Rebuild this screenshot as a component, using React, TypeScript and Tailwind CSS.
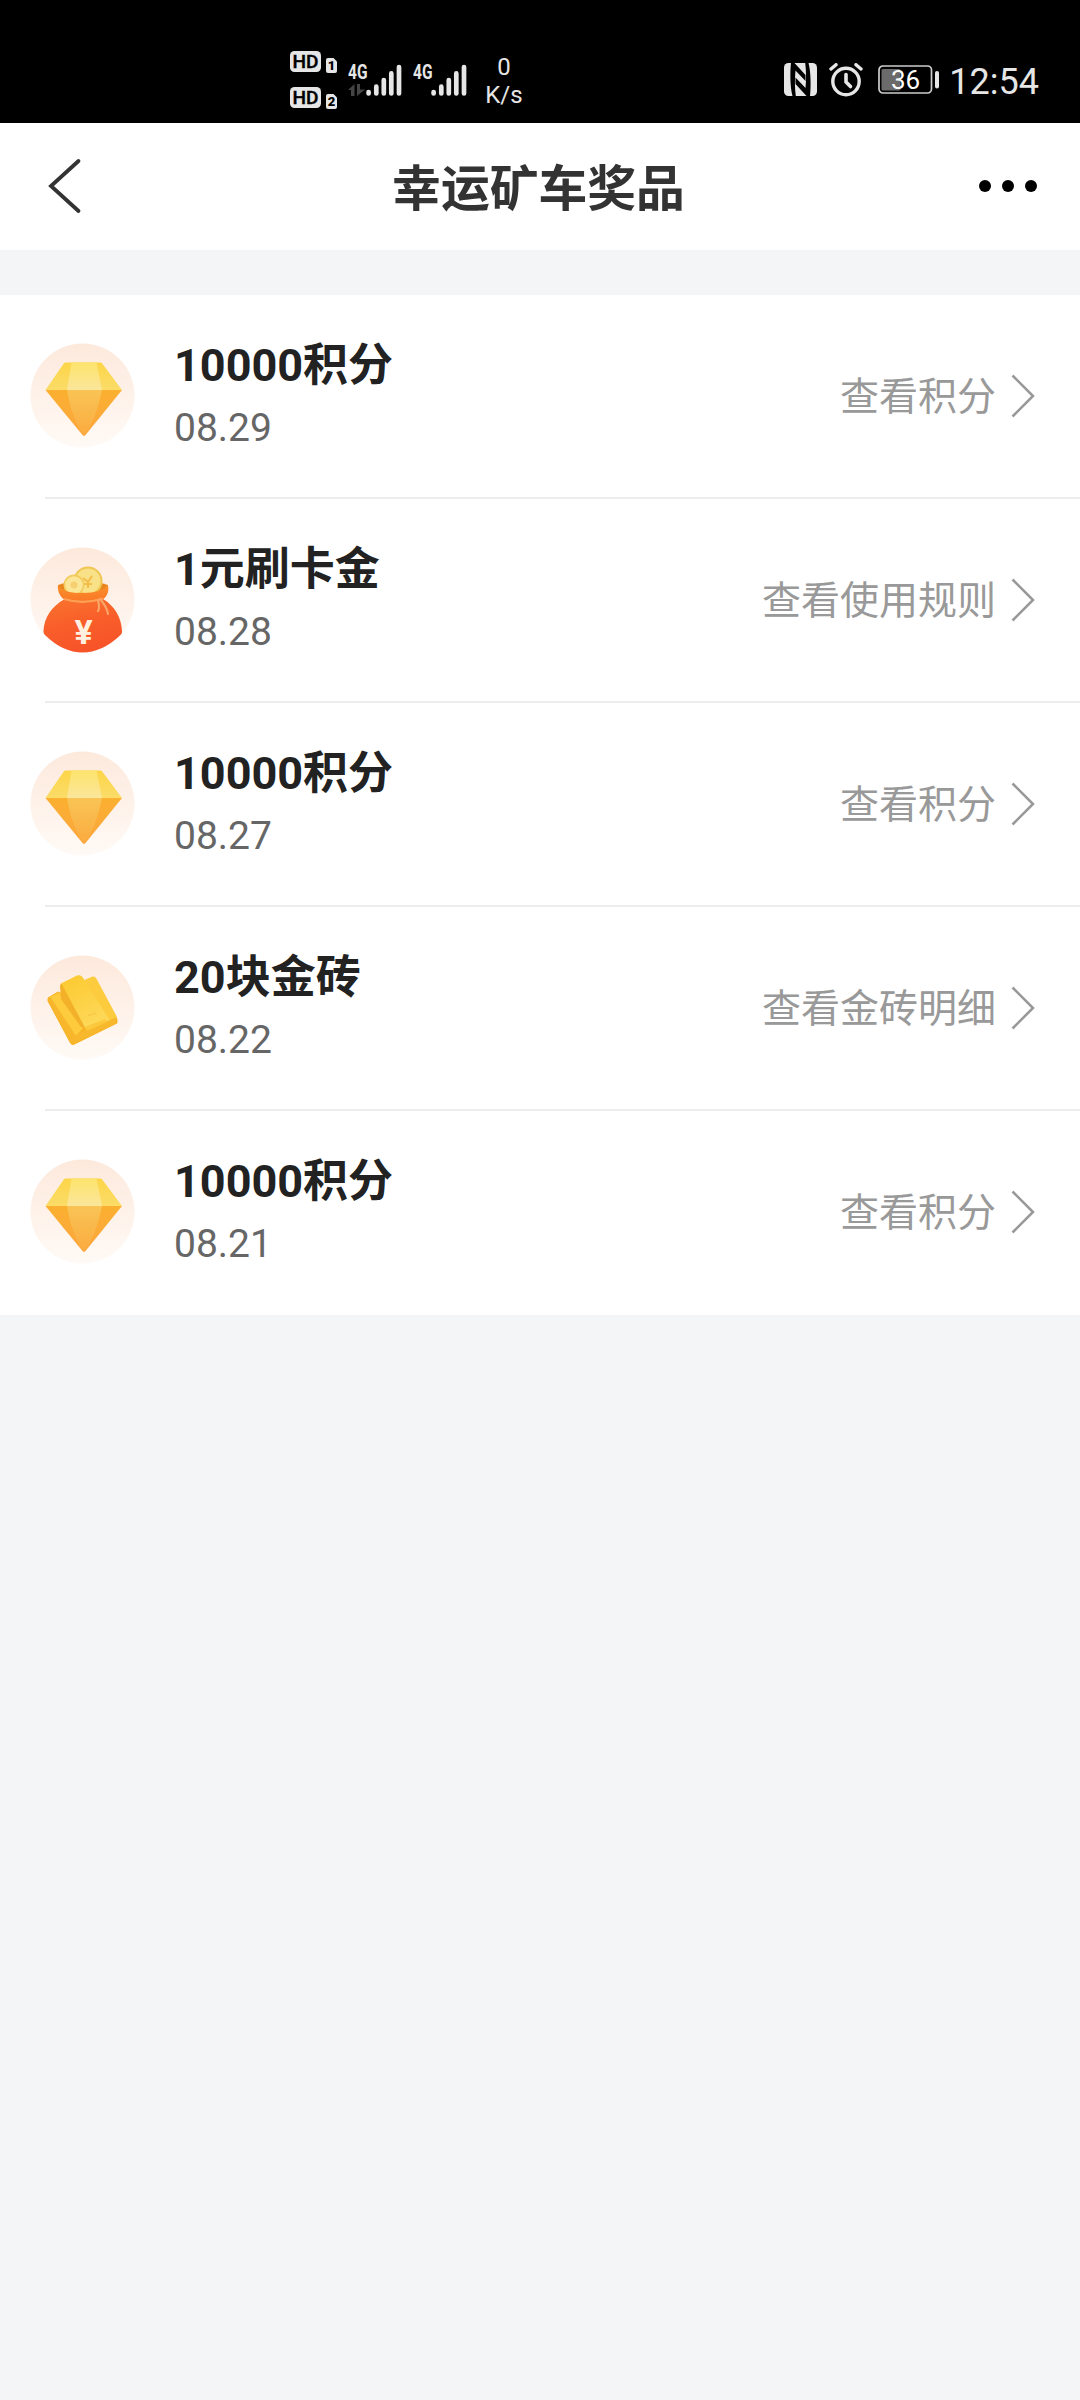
import type { ReactNode } from "react"

type PrizeKind = "points" | "cash" | "gold"

interface Prize {
  title: string
  date: string
  action: string
  kind: PrizeKind
}

const prizes: Prize[] = [
  { title: "10000积分", date: "08.29", action: "查看积分", kind: "points" },
  { title: "1元刷卡金", date: "08.28", action: "查看使用规则", kind: "cash" },
  { title: "10000积分", date: "08.27", action: "查看积分", kind: "points" },
  { title: "20块金砖", date: "08.22", action: "查看金砖明细", kind: "gold" },
  { title: "10000积分", date: "08.21", action: "查看积分", kind: "points" },
]

function HdBadge({ sim }: { sim: number }) {
  return (
    <svg className="w-[48px] h-[23px] block" viewBox="0 0 48 23">
      <rect x="0" y="0" width="31" height="21" rx="4.5" fill="#e6e6e6" />
      <text x="15.5" y="17" textAnchor="middle" fontSize="18.5" fontWeight="500" textLength="26" lengthAdjust="spacingAndGlyphs" fill="#000" stroke="#000" strokeWidth="0.4">
        HD
      </text>
      <path d="M36 9a2 2 0 0 1 2-2h5.5l3.500 3.500V20a2 2 0 0 1-2 2h-7a2 2 0 0 1-2-2z" fill="#e6e6e6" />
      <text x="41.5" y="19.3" textAnchor="middle" fontSize="13" fontWeight="900" fill="#000">
        {sim}
      </text>
    </svg>
  )
}

function Signal({ active }: { active?: boolean }) {
  return (
    <svg className="w-[54px] h-[48px] block" viewBox="0 -12 54 48">
      <text x="0" y="16.5" fontSize="20.5" fontWeight="700" textLength="19.5" lengthAdjust="spacingAndGlyphs" fill="#e6e6e6">
        4G
      </text>
      {active && (
        <g fill="#444">
          <path d="M0 28l6.500-6v12H3v-6z" />
          <path d="M9 22h3v5.500h5L9 34z" />
        </g>
      )}
      <g stroke="#e6e6e6" strokeWidth="4.7" strokeLinecap="round">
        <path d="M20.600 30.100v1.300M28.300 24.700v6.700M35.800 18.100v13.300M43.300 11.400v20M51 5v26.400" />
      </g>
    </svg>
  )
}

function NfcIcon() {
  return (
    <svg className="w-[33px] h-[33px] block" viewBox="0 0 33 33">
      <rect width="33" height="33" rx="4.500" fill="#e6e6e6" />
      <g fill="#000">
        <path d="M7 0h3.500L21.500 12v6L11.500 7.500c-.8 8-.8 18 .3 25.500H8.500C6 24 6 8 7 0z" />
        <path d="M26 33h-3.500L11.500 21v-6.500L21.500 25c.8-8 .8-17-.3-25h3.300c2.500 9 2.500 25 1.500 33z" />
      </g>
    </svg>
  )
}

function AlarmIcon() {
  return (
    <svg className="w-[34px] h-[34px] block" viewBox="0 0 34 34" fill="none" stroke="#e6e6e6" strokeLinecap="round">
      <circle cx="17" cy="18.500" r="13.200" strokeWidth="3.400" />
      <path d="M17 11.500v7.500l4.500 4.500" strokeWidth="3.600" strokeLinejoin="round" />
      <path d="M2 6l5-4.300M32 6l-5-4.300" strokeWidth="3.400" />
    </svg>
  )
}

function Battery() {
  return (
    <svg className="w-[62px] h-[30px] block" viewBox="0 0 62 30">
      <rect x="1" y="1" width="52.500" height="27" rx="4" fill="none" stroke="#ccc" strokeWidth="1.700" />
      <rect x="3.500" y="4" width="19" height="21.500" rx="1.500" fill="#6b6b6b" />
      <text x="27.500" y="24" textAnchor="middle" fontSize="26" fill="#fff">
        36
      </text>
      <rect x="57" y="6" width="4" height="17.500" rx="2" fill="#e6e6e6" />
    </svg>
  )
}

function StatusBar() {
  return (
    <div className="h-[123px] bg-black flex items-start pl-[290px] pr-[41px] text-[#e6e6e6]">
      <div className="pt-[51px] flex flex-col gap-[13px]">
        <HdBadge sim={1} />
        <HdBadge sim={2} />
      </div>
      <div className="pt-[50px] pl-[10px] flex gap-[11px]">
        <Signal active />
        <Signal />
      </div>
      <div className="mt-[53px] ml-[17px] w-[40px] text-center text-[24px] leading-[28px]">
        <div>0</div>
        <div>K/s</div>
      </div>
      <div className="ml-auto mt-[63px] flex h-[36px]">
        <NfcIcon />
        <div className="ml-[12px]">
          <AlarmIcon />
        </div>
        <div className="ml-[15px] mt-[2px]">
          <Battery />
        </div>
        <span className="ml-[9px] pt-px text-[36px] leading-[36px] whitespace-nowrap">12:54</span>
      </div>
    </div>
  )
}

function Header() {
  return (
    <header className="h-[127px] bg-white flex items-center justify-between pl-[48px] pr-[43px] pb-[2px]">
      <svg className="w-[54px] h-[56px]" viewBox="0 0 54 56" fill="none" stroke="#333" strokeWidth="3.800" strokeLinecap="round">
        <path d="M30.500 3L3 28l27.500 25" strokeLinejoin="miter" />
      </svg>
      <h1 className="text-[48.800px] leading-[64px] font-bold text-[#333] pt-[9px] pr-[4px]">幸运矿车奖品</h1>
      <div className="flex gap-[11px]">
        <span className="size-[12px] rounded-full bg-black" />
        <span className="size-[12px] rounded-full bg-black" />
        <span className="size-[12px] rounded-full bg-black" />
      </div>
    </header>
  )
}

function IconFrame({ children }: { children: ReactNode }) {
  return (
    <svg className="w-[105px] h-[106px] shrink-0 block" viewBox="0 0 105 106">
      <defs>
        <linearGradient id="disc" x1="0" y1="0" x2="0" y2="1">
          <stop offset="0" stopColor="#fde9dc" />
          <stop offset="1" stopColor="#fffaf6" />
        </linearGradient>
        <linearGradient id="gemTop" x1="0" y1="0" x2="0" y2="1">
          <stop offset="0" stopColor="#fcd548" />
          <stop offset="1" stopColor="#fbdc68" />
        </linearGradient>
        <linearGradient id="gemBottom" x1="0" y1="0" x2="0" y2="1">
          <stop offset="0" stopColor="#fbb030" />
          <stop offset="1" stopColor="#fba63e" />
        </linearGradient>
        <linearGradient id="gemCore" x1="0" y1="0" x2="0" y2="1">
          <stop offset="0" stopColor="#f9c455" />
          <stop offset="1" stopColor="#fbab40" />
        </linearGradient>
        <linearGradient id="gemFace" x1="0" y1="0" x2="0" y2="1">
          <stop offset="0" stopColor="#fde36c" />
          <stop offset="1" stopColor="#fbe69b" />
        </linearGradient>
        <linearGradient id="bag" x1="0" y1="0" x2="0.300" y2="1">
          <stop offset="0" stopColor="#f9742e" />
          <stop offset="0.500" stopColor="#f95f2a" />
          <stop offset="1" stopColor="#f75429" />
        </linearGradient>
        <linearGradient id="rim" x1="0" y1="0" x2="0" y2="1">
          <stop offset="0" stopColor="#f9922c" />
          <stop offset="1" stopColor="#fa7526" />
        </linearGradient>
        <linearGradient id="brick" x1="0" y1="0" x2="0.500" y2="1">
          <stop offset="0" stopColor="#fcc92f" />
          <stop offset="1" stopColor="#fdd858" />
        </linearGradient>
      </defs>
      <circle cx="52.500" cy="52.500" r="52" fill="url(#disc)" />
      {children}
    </svg>
  )
}

function GemIcon() {
  return (
    <IconFrame>
      <path d="M36 19.500h34q1.500 0 2.400 1.200L92 47H15.500L33.600 20.700q.9-1.200 2.400-1.200z" fill="url(#gemTop)" />
      <path d="M41.500 19.500h25L72 47H37z" fill="url(#gemFace)" />
      <path d="M15.500 47H92L55.500 92q-1.500 1.700-3 0z" fill="url(#gemBottom)" />
      <path d="M37 47h35q-6 30-18 45-12-15-17-45z" fill="url(#gemCore)" />
    </IconFrame>
  )
}

function MoneyBagIcon() {
  return (
    <IconFrame>
      <path d="M28 38q25-8 50 0l-3 9H31z" fill="#e9841c" />
      <circle cx="58" cy="34" r="14.500" fill="#efc652" />
      <circle cx="58" cy="34" r="12.500" fill="#f9e188" />
      <path d="M53 31l5 4 4-6M58 35v6M53 37h9" stroke="#f3bd48" strokeWidth="2" fill="none" />
      <circle cx="44" cy="38" r="10.500" fill="#f2cb5c" />
      <circle cx="44" cy="38" r="8.800" fill="#fbe596" />
      <circle cx="44" cy="38" r="3.500" fill="#f6d070" />
      <path d="M35 52q19 6 38 0c12 7 18.500 19 19 32 .2 2-.5 3-2 4.500Q72 105.500 52.500 105.500T15.500 88.500c-1.500-1.500-2-2.500-2-4.500.5-13 8-25 21.500-32z" fill="url(#bag)" />
      <path d="M28 37.500c4 7 13 8.500 25 8.500s22-3 24.500-8.500c2.500 6-.5 13-5.500 15.500q-18 4.500-37 0c-5-3-8-9-7-15.500z" fill="url(#rim)" />
      <path d="M34 52q19 6 39-.5" stroke="#fda055" strokeWidth="2.200" fill="none" />
      <path d="M68 53c1 6 2 8 0 11M70 52c4 5 7 8 8 15" stroke="#fba468" strokeWidth="2.200" fill="none" strokeLinecap="round" />
      <text x="53.500" y="96.500" textAnchor="middle" fontSize="34" fontWeight="700" fill="#fff0df">
        ¥
      </text>
    </IconFrame>
  )
}

function GoldIcon() {
  return (
    <IconFrame>
      {/* lower stack */}
      <path d="M18 43l10-6 59 27v4L43.500 89.500q-2 .5-3-1.500L18 46z" fill="#f8b425" stroke="#f8b425" strokeLinejoin="round" />
      <path d="M20 42l9-4.500L54 72l-9 10z" fill="#fdcb3c" />
      <path d="M18 44l3-1 25 38-3 8q-2 0-3-2z" fill="#f7b62c" />
      <path d="M52 26l10-4.300q3-.7 4.500 2L87 62l-9 5z" fill="#fdcb3e" />
      {/* top brick */}
      <path d="M30 31q0-2 2-3l4 4 21 42-6-2-20-28z" fill="#f2b129" />
      <path d="M32 28.500l15-7.500q3-1 5 1l27 43-23 8.500z" fill="url(#brick)" stroke="url(#brick)" strokeLinejoin="round" />
      <path d="M46 80l41-18v5L44 88z" fill="#f8b82d" />
      <path d="M55 72l20-8 2 3-20 9z" fill="#fcc93c" />
      <path d="M58 60.500l8-2.500" stroke="#f6c445" strokeWidth="1.200" />
    </IconFrame>
  )
}

function PrizeIcon({ kind }: { kind: PrizeKind }) {
  if (kind === "cash") return <MoneyBagIcon />
  if (kind === "gold") return <GoldIcon />
  return <GemIcon />
}

function PrizeRow({ prize, last }: { prize: Prize; last: boolean }) {
  return (
    <li>
      <div className="h-[202px] flex items-center pl-[30px] pr-[44px]">
        <PrizeIcon kind={prize.kind} />
        <div className="ml-[39px] pt-[2px] flex-1">
          <div className="text-[45px] leading-[62px] font-bold text-[#222]">{prize.title}</div>
          <div className="text-[39px] leading-[62px] text-[#666]">{prize.date}</div>
        </div>
        <span className="pt-[2px] text-[39px] leading-[54px] text-[#999]">{prize.action}</span>
        <svg className="ml-[15px] w-[25px] h-[46px]" viewBox="0 0 25 46" fill="none" stroke="#999" strokeWidth="2.600">
          <path d="M1.500 2.500l20.500 20.500-20.500 20.500" />
        </svg>
      </div>
      <div className={last ? "h-[2px]" : "h-[2px] ml-[45px] bg-[#ececec]"} />
    </li>
  )
}

export default function App() {
  return (
    <div className="w-[1080px] h-[2400px] overflow-hidden bg-[#f4f5f7] font-['Roboto','Noto_Sans_CJK_SC',sans-serif]">
      <StatusBar />
      <Header />
      <ul className="mt-[45px] bg-white">
        {prizes.map((prize, i) => (
          <PrizeRow key={prize.date} prize={prize} last={i === prizes.length - 1} />
        ))}
      </ul>
    </div>
  )
}
